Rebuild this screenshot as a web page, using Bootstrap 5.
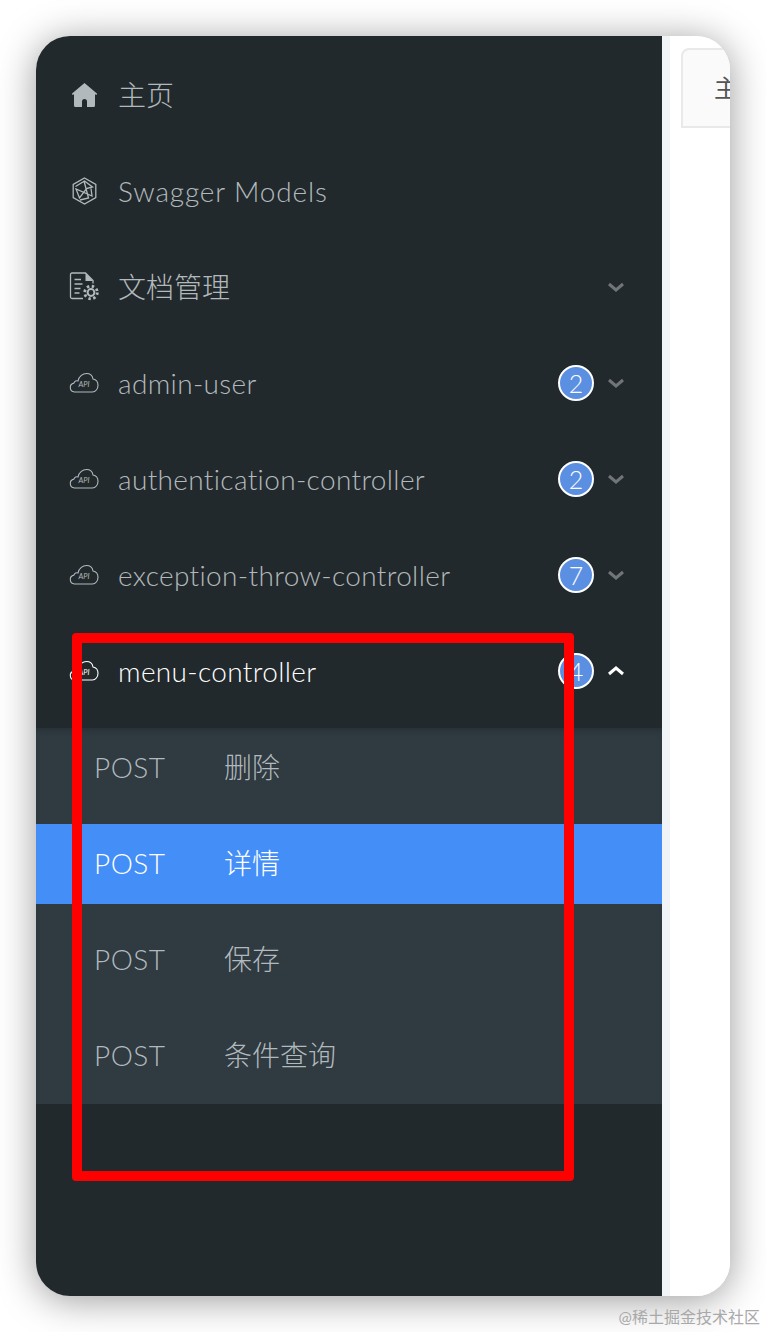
<!DOCTYPE html>
<html lang="zh-CN">
<head>
    <meta charset="UTF-8">
    <meta name="viewport" content="width=device-width, initial-scale=1.0">
    <title>Swagger 菜单</title>
    <link href="https://cdn.jsdelivr.net/npm/bootstrap@5.3.0/dist/css/bootstrap.min.css" rel="stylesheet">
    <style>
        html, body { height: 100%; overflow: hidden; background: #fff; }
        body { font-family: Lato, "Noto Sans CJK SC", sans-serif; font-weight: 300; }
        .page-wrap { padding: 36px 36px 0; height: 1332px; }
        .app-window { width: 694px; height: 1260px; border-radius: 34px; overflow: hidden; background: #fff; box-shadow: 0 4px 38px rgba(0,0,0,.4); }
        .side { width: 626px; background: #22292c; padding-top: 19px; }
        .menu-row { height: 80px; margin-bottom: 16px; padding-left: 35px; padding-right: 37px; font-size: 28px; color: #b2b9bd; }
        .menu-row.open { color: #fff; margin-bottom: 17px; }
        .menu-ico { width: 28px; height: 28px; margin-right: 19px; flex: none; overflow: visible; }
        .latin-label { letter-spacing: .35px; }
        .latin-label.wide { letter-spacing: .85px; }
        .count-dot { width: 36px; height: 36px; border: 2px solid #fff; border-radius: 50%; background: #5b8fe2; color: #fff; font-size: 25px; line-height: 1; }
        .chev { width: 18px; height: 12px; margin-left: 13px; flex: none; }
        .sub-list { background: #2f3a41; padding-bottom: 8px; box-shadow: inset 0 5px 8px -5px rgba(0,0,0,.3); }
        .sub-row { height: 80px; margin-bottom: 16px; padding-left: 58px; padding-bottom: 2px; font-size: 28px; color: #b2b9bd; }
        .sub-row:last-child { margin-bottom: 0; }
        .sub-row.active { background: #448ef7; color: #fff; }
        .sub-verb { width: 130px; letter-spacing: .5px; }
        .doc-pane { flex: 1; background: #fff; border-left: 8px solid #f0f4f7; padding: 12px 0 0 11px; overflow: hidden; }
        .doc-tab { width: 80px; height: 80px; background: #fafafa; border: 2px solid #e9e9e9; border-radius: 8px 8px 0 0; color: #555; font-size: 24px; font-weight: 400; padding: 20px 0 0 31px; white-space: nowrap; }
        .red-frame { left: 36px; top: 597px; width: 502px; height: 548px; border: 10px solid #f00; border-radius: 4px; pointer-events: none; }
        .watermark { right: 6px; bottom: 3px; font-size: 16px; line-height: 24px; color: #a9a9a9; font-weight: 400; }
    </style>
</head>
<body>
<div class="page-wrap">
    <div class="app-window d-flex position-relative">
        <!-- Sidebar -->
        <nav class="side flex-shrink-0">
            <div class="menu-row d-flex align-items-center">
                <svg class="menu-ico" viewBox="0 0 28 28"><path fill="currentColor" fill-rule="evenodd" d="M13.500 2 .8 12.800l.9 1.300L3 13.300V24.500A1.500 1.500 0 0 0 4.500 26h18a1.500 1.500 0 0 0 1.500-1.500V13.300l1.300.8.900-1.300zM11 26v-5.500a2.500 2.500 0 0 1 5 0V26z"/></svg>
                <span>主页</span>
            </div>
            <div class="menu-row d-flex align-items-center">
                <svg class="menu-ico" viewBox="0 0 28 28" fill="none" stroke="currentColor" stroke-width="1.300"><path d="M13.500 1 24.800 7.500v13L13.500 27 2.200 20.500v-13z"/><path d="M4.500 9.500 13.500 4l8 6-6 1.500-7 9.500-3.500-9 16 7-1-7.500M13 4l4.500 17-8.500 2"/></svg>
                <span class="latin-label wide">Swagger Models</span>
            </div>
            <div class="menu-row d-flex align-items-center">
                <svg class="menu-ico" viewBox="0 0 28 28" fill="none" stroke="currentColor" stroke-width="1.300"><path d="M12 25.500H1A1.500 1.500 0 0 1-.5 24V1.500A1.500 1.500 0 0 1 1 0h13.500L22 7.500v3"/><path fill="currentColor" stroke="none" d="M14.500 0 22 8h-7.500z"/><path d="M3.500 6.500h6.500M3.500 11h8M3.500 15.500h6M3.500 20h5"/><circle cx="20" cy="19.500" r="3.400" stroke-width="2"/><circle cx="20" cy="19.500" r="6.300" stroke-width="2.800" stroke-dasharray="2.400 2.550"/></svg>
                <span>文档管理</span>
                <svg class="chev ms-auto" viewBox="0 0 18 12"><path d="M2 3l7 6 7-6" fill="none" stroke="#6f7578" stroke-width="3"/></svg>
            </div>
            <div class="menu-row d-flex align-items-center">
                <svg class="menu-ico" viewBox="0 0 28 28" fill="none" stroke="currentColor" stroke-width="1.100"><path d="M3.500 23a4.500 4.500 0 0 1-.6-8.900C3.500 12 5.500 11.500 7 12 8 7 12 4.500 15.500 4.500c3.500 0 6 2.500 6.500 5.500 3 .5 5 3 5 6.200 0 3.800-2.500 6.800-5.500 6.800z"/><text x="13" y="18" text-anchor="middle" fill="currentColor" stroke="none" font-size="7.500" font-weight="400" font-style="italic">API</text></svg>
                <span class="latin-label">admin-user</span>
                <span class="count-dot d-flex align-items-center justify-content-center ms-auto">2</span>
                <svg class="chev" viewBox="0 0 18 12"><path d="M2 3l7 6 7-6" fill="none" stroke="#6f7578" stroke-width="3"/></svg>
            </div>
            <div class="menu-row d-flex align-items-center">
                <svg class="menu-ico" viewBox="0 0 28 28" fill="none" stroke="currentColor" stroke-width="1.100"><path d="M3.500 23a4.500 4.500 0 0 1-.6-8.900C3.500 12 5.500 11.500 7 12 8 7 12 4.500 15.500 4.500c3.500 0 6 2.500 6.500 5.500 3 .5 5 3 5 6.200 0 3.800-2.500 6.800-5.500 6.800z"/><text x="13" y="18" text-anchor="middle" fill="currentColor" stroke="none" font-size="7.500" font-weight="400" font-style="italic">API</text></svg>
                <span class="latin-label">authentication-controller</span>
                <span class="count-dot d-flex align-items-center justify-content-center ms-auto">2</span>
                <svg class="chev" viewBox="0 0 18 12"><path d="M2 3l7 6 7-6" fill="none" stroke="#6f7578" stroke-width="3"/></svg>
            </div>
            <div class="menu-row d-flex align-items-center">
                <svg class="menu-ico" viewBox="0 0 28 28" fill="none" stroke="currentColor" stroke-width="1.100"><path d="M3.500 23a4.500 4.500 0 0 1-.6-8.900C3.500 12 5.500 11.500 7 12 8 7 12 4.500 15.500 4.500c3.500 0 6 2.500 6.500 5.500 3 .5 5 3 5 6.200 0 3.800-2.500 6.800-5.500 6.800z"/><text x="13" y="18" text-anchor="middle" fill="currentColor" stroke="none" font-size="7.500" font-weight="400" font-style="italic">API</text></svg>
                <span class="latin-label">exception-throw-controller</span>
                <span class="count-dot d-flex align-items-center justify-content-center ms-auto">7</span>
                <svg class="chev" viewBox="0 0 18 12"><path d="M2 3l7 6 7-6" fill="none" stroke="#6f7578" stroke-width="3"/></svg>
            </div>
            <div class="menu-row open d-flex align-items-center">
                <svg class="menu-ico" viewBox="0 0 28 28" fill="none" stroke="currentColor" stroke-width="1.100"><path d="M3.500 23a4.500 4.500 0 0 1-.6-8.900C3.500 12 5.500 11.500 7 12 8 7 12 4.500 15.500 4.500c3.500 0 6 2.500 6.500 5.500 3 .5 5 3 5 6.200 0 3.800-2.500 6.800-5.500 6.800z"/><text x="13" y="18" text-anchor="middle" fill="currentColor" stroke="none" font-size="7.500" font-weight="400" font-style="italic">API</text></svg>
                <span class="latin-label">menu-controller</span>
                <span class="count-dot d-flex align-items-center justify-content-center ms-auto">4</span>
                <svg class="chev" viewBox="0 0 18 12"><path d="M2 9l7-6 7 6" fill="none" stroke="#fff" stroke-width="3"/></svg>
            </div>
            <div class="sub-list">
                <div class="sub-row d-flex align-items-center"><span class="sub-verb">POST</span><span>删除</span></div>
                <div class="sub-row active d-flex align-items-center"><span class="sub-verb">POST</span><span>详情</span></div>
                <div class="sub-row d-flex align-items-center"><span class="sub-verb">POST</span><span>保存</span></div>
                <div class="sub-row d-flex align-items-center"><span class="sub-verb">POST</span><span>条件查询</span></div>
            </div>
        </nav>
        <!-- Document pane, cut off by the window edge -->
        <main class="doc-pane">
            <div class="doc-tab">主页</div>
        </main>
        <!-- Annotation drawn over the screenshot -->
        <div class="red-frame position-absolute"></div>
    </div>
</div>
<div class="watermark position-absolute">@稀土掘金技术社区</div>
<script src="https://cdn.jsdelivr.net/npm/bootstrap@5.3.0/dist/js/bootstrap.bundle.min.js"></script>
</body>
</html>
